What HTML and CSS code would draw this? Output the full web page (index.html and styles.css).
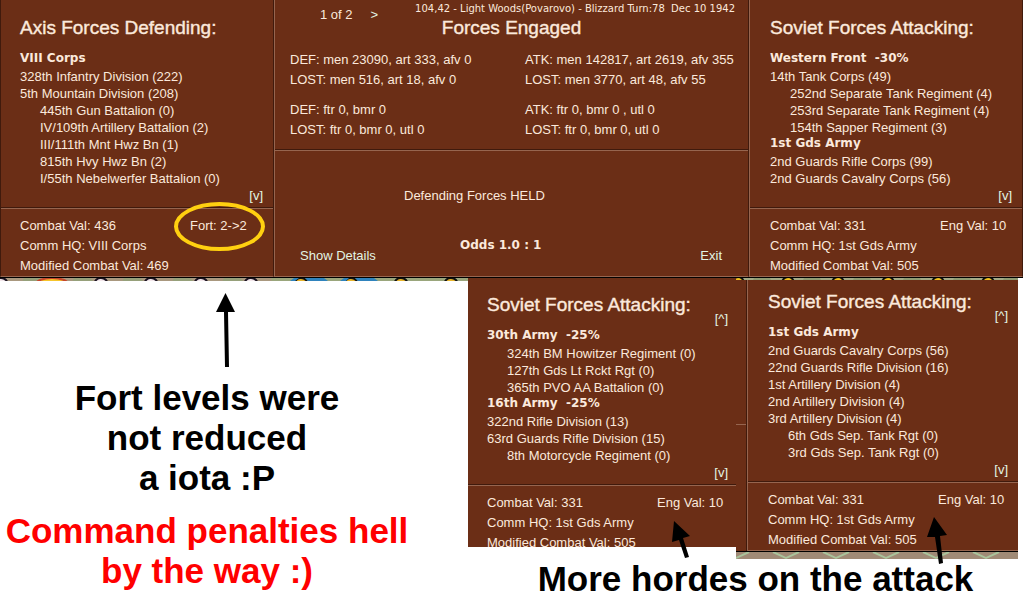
FILE: index.html
```html
<!DOCTYPE html>
<html lang="en">
<head>
    <meta charset="UTF-8">
    <meta name="viewport" content="width=device-width, initial-scale=1.0">
    <title>Forces Engaged</title>
    <link rel="stylesheet" href="styles.css">
</head>

<body>
    <!-- map tile edge, reused below every panel -->
    <svg class="defs" width="0" height="0" aria-hidden="true">
        <defs>
            <pattern id="land" width="50" height="8" patternUnits="userSpaceOnUse">
                <rect width="50" height="8" fill="#a9987f"/>
                <path d="M24 0h16l8 8H20z" fill="#96a07a"/>
                <circle cx="1" cy="7" r="7" fill="#f3e6ea" stroke="#1b1220" stroke-width="2"/>
                <circle cx="51" cy="7" r="7" fill="#f3e6ea" stroke="#1b1220" stroke-width="2"/>
            </pattern>
            <pattern id="tiles" width="50" height="8" patternUnits="userSpaceOnUse">
                <rect width="50" height="8" fill="#a3aa86"/>
                <path d="M18 0h16l4 8H14z" fill="#8f9b72"/>
                <circle cx="2" cy="5" r="6" fill="#f2c21c" stroke="#111" stroke-width="2"/>
                <circle cx="52" cy="5" r="6" fill="#f2c21c" stroke="#111" stroke-width="2"/>
            </pattern>
            <pattern id="counters" width="50" height="8" patternUnits="userSpaceOnUse">
                <rect width="50" height="8" fill="#9aa67c"/>
                <circle cx="1" cy="7" r="7" fill="#e8b42a" stroke="#111" stroke-width="2"/>
                <circle cx="51" cy="7" r="7" fill="#e8b42a" stroke="#111" stroke-width="2"/>
            </pattern>
            <pattern id="hexes" width="50" height="8" patternUnits="userSpaceOnUse">
                <rect width="50" height="8" fill="#a08a76"/>
                <path d="M-13 0l13 6 13-6M37 0l13 6 13-6" fill="none" stroke="#a9c39a" stroke-width="2"/>
            </pattern>
        </defs>
    </svg>

    <main class="report">
        <section class="panel axis">
            <div class="forces">
                <h2>Axis Forces Defending:</h2>
                <h3>VIII Corps</h3>
                <ul>
                    <li>328th Infantry Division (222)</li>
                    <li>5th Mountain Division (208)</li>
                    <li class="sub">445th Gun Battalion (0)</li>
                    <li class="sub">IV/109th Artillery Battalion (2)</li>
                    <li class="sub">III/111th Mnt Hwz Bn (1)</li>
                    <li class="sub">815th Hvy Hwz Bn (2)</li>
                    <li class="sub">I/55th Nebelwerfer Battalion (0)</li>
                </ul>
                <button type="button" class="scroll down">[v]</button>
            </div>
            <div class="totals">
                <span>Combat Val: 436</span>
                <span class="fort">Fort: 2-&gt;2</span>
                <span class="wide">Comm HQ: VIII Corps</span>
                <span class="wide">Modified Combat Val: 469</span>
            </div>
        </section>

        <section class="panel engaged">
            <div class="summary">
                <div class="topline">
                    <span>1 of 2</span>
                    <button type="button">&gt;</button>
                    <span class="place">104,42 - Light Woods(Povarovo) - Blizzard Turn:78&nbsp; Dec 10 1942</span>
                </div>
                <h2>Forces Engaged</h2>
                <div class="losses">
                    <span>DEF: men 23090, art 333, afv 0</span>
                    <span>ATK: men 142817, art 2619, afv 355</span>
                    <span>LOST: men 516, art 18, afv 0</span>
                    <span>LOST: men 3770, art 48, afv 55</span>
                </div>
                <div class="losses">
                    <span>DEF: ftr 0, bmr 0</span>
                    <span>ATK: ftr 0, bmr 0 , utl 0</span>
                    <span>LOST: ftr 0, bmr 0, utl 0</span>
                    <span>LOST: ftr 0, bmr 0, utl 0</span>
                </div>
            </div>
            <div class="result">
                <p class="held">Defending Forces HELD</p>
                <p class="odds">Odds 1.0 : 1</p>
                <div class="actions">
                    <button type="button">Show Details</button>
                    <button type="button">Exit</button>
                </div>
            </div>
        </section>

        <section class="panel soviet">
            <div class="forces">
                <h2>Soviet Forces Attacking:</h2>
                <h3>Western Front&nbsp; -30%</h3>
                <ul>
                    <li>14th Tank Corps (49)</li>
                    <li class="sub">252nd Separate Tank Regiment (4)</li>
                    <li class="sub">253rd Separate Tank Regiment (4)</li>
                    <li class="sub">154th Sapper Regiment (3)</li>
                </ul>
                <h3>1st Gds Army</h3>
                <ul>
                    <li>2nd Guards Rifle Corps (99)</li>
                    <li>2nd Guards Cavalry Corps (56)</li>
                </ul>
                <button type="button" class="scroll down">[v]</button>
            </div>
            <div class="totals">
                <span>Combat Val: 331</span>
                <span>Eng Val: 10</span>
                <span class="wide">Comm HQ: 1st Gds Army</span>
                <span class="wide">Modified Combat Val: 505</span>
            </div>
        </section>
    </main>

    <div class="lower">
        <div class="notes">
            <svg class="terrain" width="100%" height="3" aria-hidden="true">
                <rect width="100%" height="3" fill="url(#land)"/>
                <ellipse cx="52" cy="6" rx="16" ry="6" fill="#f6c52c" stroke="#c8462a" stroke-width="2"/>
                <rect width="42%" x="58%" height="3" fill="url(#counters)"/>
                <path d="M290 3l4-3h5l-4 3zM308 3l-3-3h19l4 3zM340 3l4-3h5l-3 3zM358 3l-3-3h19l4 3z" fill="#2f83bd"/>
            </svg>
            <div class="notes-text">
                <svg class="arrow-up" width="20" height="75" viewBox="0 0 20 75" aria-hidden="true">
                    <path d="M9.500 0L19 19H12L13 74H9L8 19H0z"/>
                </svg>
                <p class="note">Fort levels were<br>not reduced<br>a iota :P</p>
                <p class="note red">Command penalties hell<br>by the way :)</p>
            </div>
        </div>

        <section class="panel more">
            <div class="forces">
                <h2>Soviet Forces Attacking:</h2>
                <button type="button" class="scroll up">[^]</button>
                <h3>30th Army&nbsp; -25%</h3>
                <ul>
                    <li class="sub">324th BM Howitzer Regiment (0)</li>
                    <li class="sub">127th Gds Lt Rckt Rgt (0)</li>
                    <li class="sub">365th PVO AA Battalion (0)</li>
                </ul>
                <h3>16th Army&nbsp; -25%</h3>
                <ul>
                    <li>322nd Rifle Division (13)</li>
                    <li>63rd Guards Rifle Division (15)</li>
                    <li class="sub">8th Motorcycle Regiment (0)</li>
                </ul>
                <button type="button" class="scroll down">[v]</button>
            </div>
            <div class="totals">
                <span>Combat Val: 331</span>
                <span class="pointed">Eng Val: 10
                    <svg class="arrow" width="19" height="38" viewBox="0 0 19 38" aria-hidden="true">
                        <path d="M3 0L19 15L12 17L18 36L14 37L8 19L1 21z"/>
                    </svg>
                </span>
                <span class="wide">Comm HQ: 1st Gds Army</span>
                <span class="wide">Modified Combat Val: 505</span>
            </div>
        </section>

        <div class="last">
            <svg class="terrain" width="100%" height="2" aria-hidden="true">
                <rect width="100%" height="2" fill="url(#tiles)"/>
            </svg>
            <div class="last-row">
                <div class="edge"></div>
                <section class="panel">
                    <div class="forces">
                        <h2>Soviet Forces Attacking:</h2>
                        <button type="button" class="scroll up">[^]</button>
                        <h3>1st Gds Army</h3>
                        <ul>
                            <li>2nd Guards Cavalry Corps (56)</li>
                            <li>22nd Guards Rifle Division (16)</li>
                            <li>1st Artillery Division (4)</li>
                            <li>2nd Artillery Division (4)</li>
                            <li>3rd Artillery Division (4)</li>
                            <li class="sub">6th Gds Sep. Tank Rgt (0)</li>
                            <li class="sub">3rd Gds Sep. Tank Rgt (0)</li>
                        </ul>
                        <button type="button" class="scroll down">[v]</button>
                    </div>
                    <div class="totals">
                        <span>Combat Val: 331</span>
                        <span class="pointed">Eng Val: 10
                            <svg class="arrow steep" width="20" height="47" viewBox="0 0 20 47" aria-hidden="true">
                                <path d="M7 0L20 18L13 19L16 46L12 47L8 20L0 20z"/>
                            </svg>
                        </span>
                        <span class="wide">Comm HQ: 1st Gds Army</span>
                        <span class="wide">Modified Combat Val: 505</span>
                    </div>
                </section>
            </div>
            <svg class="terrain" width="100%" height="7" aria-hidden="true">
                <rect width="100%" height="7" fill="url(#hexes)"/>
            </svg>
        </div>

        <p class="note hordes">More hordes on the attack</p>
    </div>
</body>
</html>
```
FILE: styles.css
```css
*, *::after {
  box-sizing: border-box;
}

body {
  margin: 0;
  background: #fff;
  color: #fbe9dc;
  font-family: "Liberation Sans", Arial, sans-serif;
  font-size: 13px;
  line-height: 20px;
}

h2, h3, p, ul {
  margin: 0;
  padding: 0;
}

ul {
  list-style: none;
}

button {
  padding: 0;
  border: none;
  background: none;
  color: #e3f5e4;
  font: inherit;
  cursor: pointer;
}

.defs {
  position: absolute;
}

.terrain {
  display: block;
}

/* top row */
.report {
  display: grid;
  grid-template-columns: 274fr 475fr 274fr;
  border-bottom: 1px solid #000;
}

.panel {
  display: flex;
  flex-direction: column;
  background: #6b2e16;
  border-left: 1px solid #96654f;
  border-bottom: 1px solid #96654f;
}

.report .panel {
  border-right: 1px solid #401a0c;
}

.forces {
  display: flex;
  flex-direction: column;
  flex: 1;
  min-height: 208px;
  padding: 16px 10px 3px 20px;
  border-bottom: 1px solid #401a0c;
  line-height: 17px;
}

h2 {
  font-size: 19px;
  font-weight: normal;
  line-height: 24px;
  -webkit-text-stroke: 1px #fbe9dc;
  -webkit-text-stroke-width: thin;
}

.forces h2 {
  margin-bottom: 10px;
}

h3, .odds {
  font-family: "DejaVu Sans", Verdana, sans-serif;
  font-size: 12px;
  font-weight: bold;
}

h3 {
  margin-bottom: 1px;
}

ul + h3 {
  margin-top: -1px;
}

.sub {
  padding-left: 20px;
}

.scroll {
  align-self: flex-end;
  line-height: 17px;
}

.down {
  margin-top: auto;
}

/* sits beside the heading without pushing the list down */
.up {
  margin: -17px 0 0;
}

.totals {
  display: grid;
  grid-template-columns: 170px auto;
  padding: 7px 0 0 20px;
  border-top: 1px solid #96654f;
}

/* outer frame of the window takes one more pixel */
.axis {
  border-left-color: #401a0c;
}

.axis .forces, .axis .totals {
  padding-left: 19px;
}

.wide {
  grid-column: span 2;
}

.fort, .pointed {
  position: relative;
  justify-self: start;
}

.fort::after {
  content: "";
  position: absolute;
  left: -16px;
  top: -14px;
  width: 91px;
  height: 49px;
  border: 4px solid #ffd010;
  border-radius: 50%;
}

/* middle panel */
.summary {
  height: 150px;
  border-bottom: 1px solid #401a0c;
}

.topline {
  display: flex;
  padding: 5px 13px 0 45px;
}

.topline button {
  margin-left: 18px;
}

.place {
  margin-left: auto;
  font-family: "DejaVu Sans", Verdana, sans-serif;
  font-size: 10px;
  line-height: 8px;
}

.engaged h2 {
  margin: -9px 0 10px;
  text-align: center;
}

.losses {
  display: grid;
  grid-template-columns: 235px auto;
  padding-left: 15px;
  margin-bottom: 10px;
}

.result {
  flex: 1;
  padding: 35px 26px 0 25px;
  border-top: 1px solid #96654f;
}

.held {
  padding-left: 104px;
}

.odds {
  padding-left: 160px;
  margin-top: 29px;
  line-height: 20px;
}

.actions {
  display: flex;
  justify-content: space-between;
  margin-top: -9px;
}

/* lower row */
.lower {
  display: grid;
  grid-template-columns: 468fr 268fr 282fr 5fr;
  align-items: start;
}

.notes {
  grid-row: span 2;
}

.notes-text {
  padding: 12px 58px 0 4px;
}

.arrow-up {
  display: block;
  margin-left: 212px;
}

.note {
  color: #000;
  font-size: 35px;
  font-weight: bold;
  line-height: 40px;
  text-align: center;
  white-space: nowrap;
}

.arrow-up + .note {
  margin-top: 10px;
}

.red {
  margin-top: 13px;
  color: #f00;
}

/* this panel ends right under its last line */
.more {
  height: 269px;
  border: none;
}

.more .forces {
  flex: none;
  min-height: 207px;
  padding: 15px 8px 3px 20px;
}

.more .totals {
  padding-left: 19px;
}

.more .forces {
  padding-left: 19px;
}

.last-row {
  display: flex;
  border-bottom: 1px solid #000;
}

.edge {
  width: 11px;
  background: linear-gradient(#96654f, #96654f) 0 144px / 100% 1px no-repeat #6b2e16;
  border-right: 1px solid #401a0c;
}

.last .panel {
  flex: 1;
}

.last .forces {
  min-height: 202px;
  padding-top: 10px;
}

.arrow {
  position: absolute;
  left: 14px;
  top: 28px;
  fill: #000;
}

.steep {
  left: -11px;
  top: 27px;
}

.hordes {
  grid-column: 2 / 5;
  margin-top: 2px;
  padding-left: 20px;
  line-height: 36px;
}
```
